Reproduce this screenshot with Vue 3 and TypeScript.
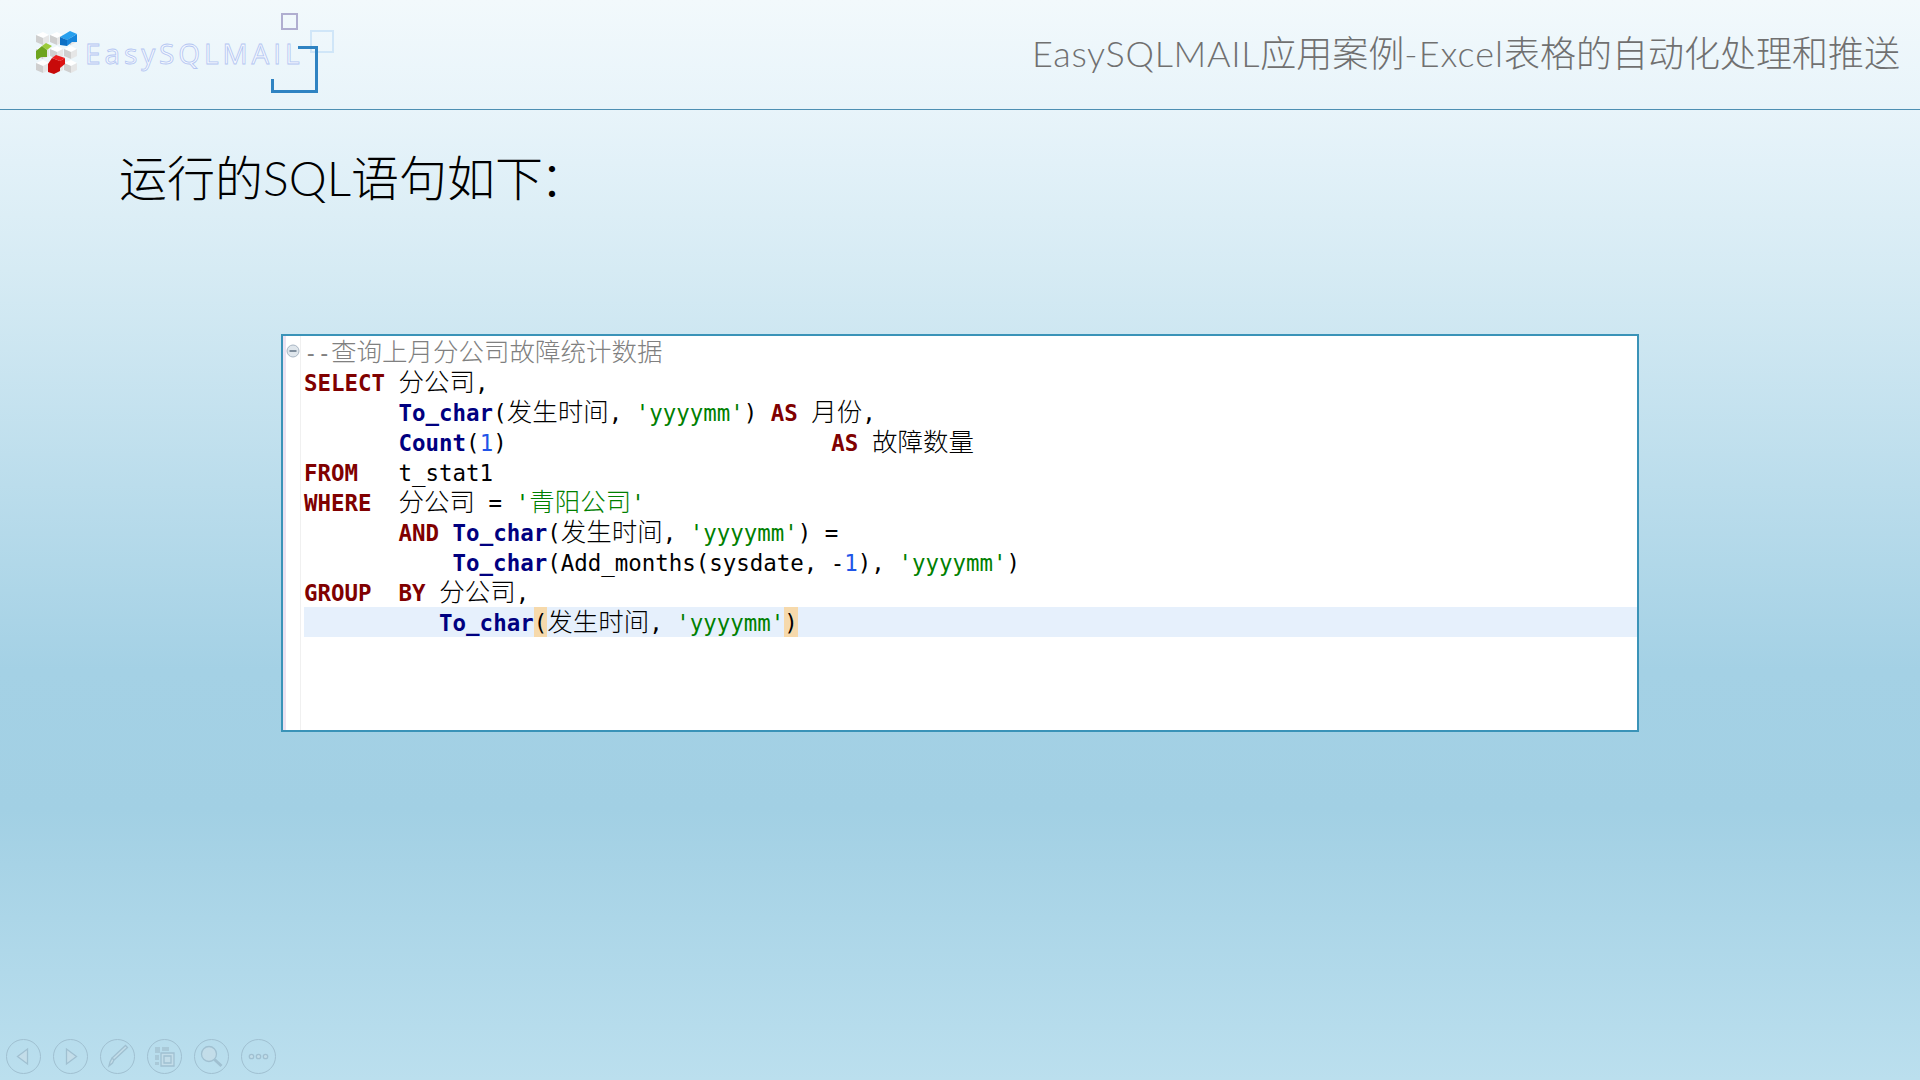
<script setup lang="ts">
type Tok = [string, string]
const lines: Tok[][] = [
  [['cm', '--'], ['cm cn', '查询上月分公司故障统计数据']],
  [['kw', 'SELECT'], ['', ' '], ['cn', '分公司'], ['', ',']],
  [['', '       '], ['fn', 'To_char'], ['', '('], ['cn', '发生时间'], ['', ', '], ['st', "'yyyymm'"], ['', ') '], ['kw', 'AS'], ['', ' '], ['cn', '月份'], ['', ',']],
  [['', '       '], ['fn', 'Count'], ['', '('], ['nu', '1'], ['', ')                       '], ['kw shift', 'AS'], ['', ' '], ['cn', '故障数量']],
  [['kw', 'FROM'], ['', '   t_stat1']],
  [['kw', 'WHERE'], ['', '  '], ['cn', '分公司'], ['', ' = '], ['st', "'"], ['st cn', '青阳公司'], ['st', "'"]],
  [['', '       '], ['kw', 'AND'], ['', ' '], ['fn', 'To_char'], ['', '('], ['cn', '发生时间'], ['', ', '], ['st', "'yyyymm'"], ['', ') =']],
  [['', '           '], ['fn', 'To_char'], ['', '(Add_months(sysdate, -'], ['nu', '1'], ['', '), '], ['st', "'yyyymm'"], ['', ')']],
  [['kw', 'GROUP'], ['', '  '], ['kw', 'BY'], ['', ' '], ['cn', '分公司'], ['', ',']],
  [['', '          '], ['fn', 'To_char'], ['hl', '('], ['cn', '发生时间'], ['', ', '], ['st', "'yyyymm'"], ['hl', ')']],
]
const tiles: [number, number][] = []
for (const y of [32, 46, 60]) for (const x of [36, 50, 64]) tiles.push([x, y])
const poly = (x: number, y: number, pts: number[][]) =>
  pts.map(([a, b]) => `${x + a},${y + b}`).join(' ')
</script>

<template>
  <div class="slide">
    <header class="top">
      <div class="logo">
        <svg class="cube" width="44" height="46" viewBox="34 30 44 46">
          <g v-for="(t, i) in tiles" :key="i">
            <polygon :points="poly(t[0], t[1], [[0, 3], [7, 0], [13, 3], [7, 6]])" fill="#fff" />
            <polygon :points="poly(t[0], t[1], [[0, 3], [7, 6], [7, 13], [0, 10]])" fill="#cfcfcf" />
            <polygon :points="poly(t[0], t[1], [[7, 6], [13, 3], [13, 10], [7, 13]])" fill="#e6e6e6" />
          </g>
          <polygon points="60,37 70,31 77,34 67,40" fill="#27a0ee" />
          <polygon points="60,37 67,40 67,46 60,45" fill="#0b6fc4" />
          <polygon points="67,40 77,34 77,42 72,42 67,46" fill="#1585dc" />
          <polygon points="42,46 46,43 52,46 47,50" fill="#9ccb3a" />
          <polygon points="36,51 42,46 47,50 47,57 41,57 37,60 36,58" fill="#6ea51f" />
          <polygon points="52,58 56,55 65,58 60,61" fill="#ee1c1c" />
          <polygon points="48,64 52,58 60,61 60,71 54,74 48,72" fill="#c80a0a" />
          <polygon points="60,61 65,58 65,64 60,68" fill="#dc1212" />
        </svg>
        <span class="brand">EasySQLMAIL</span>
        <i class="sq sq-a"></i>
        <i class="sq sq-b"></i>
        <i class="bracket"></i>
        <i class="tick"></i>
      </div>
      <div class="title"><span class="t-a">EasySQLMAIL</span>应用案例<span class="t-b">-Excel</span>表格的自动化处理和推送</div>
    </header>

    <h1 class="heading">运行的SQL语句如下<span class="colon">：</span></h1>

    <section class="editor">
      <div class="gutter">
        <svg class="fold" width="14" height="14" viewBox="0 0 14 14">
          <circle cx="7" cy="7" r="6" fill="#dfe6ec" stroke="#a9b6c4" />
          <path d="M3.5 7h7" stroke="#56687c" stroke-width="1.4" />
        </svg>
      </div>
      <div class="code">
        <div v-for="(l, i) in lines" :key="i" class="line" :class="{ cur: i === 9 }">
          <span v-for="(t, j) in l" :key="j" :class="t[0]">{{ t[1] }}</span>
        </div>
      </div>
    </section>

    <footer class="nav">
      <button class="btn">
        <svg width="33" height="33" viewBox="1 1 33 33"><path d="M21.5 10v15L11.5 17.500z" class="ic" /></svg>
      </button>
      <button class="btn">
        <svg width="33" height="33" viewBox="1 1 33 33"><path d="M13.500 10v15l10-7.500z" class="ic" /></svg>
      </button>
      <button class="btn">
        <svg width="33" height="33" viewBox="1 1 33 33"><path d="M27.500 8.500 14 21l-2-2L25.500 6.500zM12 19l2 2-1.500 3-3.500 3 1-4z" class="ic" /></svg>
      </button>
      <button class="btn">
        <svg width="33" height="33" viewBox="1 1 33 33">
          <path d="M8 8h5v6H8zM15 8h7v4h-7zM8 16h4v5H8zM8 23h4v3H8z" class="ic solid" />
          <path d="M14 14h13v13H14z" class="ic" />
          <path d="M17 17h7v7h-7z" class="ic" />
        </svg>
      </button>
      <button class="btn">
        <svg width="33" height="33" viewBox="1 1 33 33">
          <circle cx="15" cy="15" r="7.500" class="ic" />
          <path d="m20.500 20.500 7 6.500" class="ic thick" />
        </svg>
      </button>
      <button class="btn">
        <svg width="33" height="33" viewBox="1 1 33 33">
          <circle cx="10.500" cy="17.500" r="2.200" class="ic" />
          <circle cx="17.500" cy="17.500" r="2.200" class="ic" />
          <circle cx="24.500" cy="17.500" r="2.200" class="ic" />
        </svg>
      </button>
    </footer>
  </div>
</template>

<style scoped>
.slide {
  width: 1920px;
  height: 1080px;
  overflow: hidden;
  display: flex;
  flex-direction: column;
  background: linear-gradient(180deg, #f2f9fc 0%, #e8f4fa 10%, #d6ebf4 25%, #a4d1e5 62%, #a2d0e4 75%, #bbdfee 100%);
  font-family: "Lato", "Noto Sans CJK SC", sans-serif;
}
.top {
  height: 109px;
  flex: none;
  border-bottom: 1px solid #4d8fb3;
  display: flex;
  justify-content: space-between;
  align-items: center;
  padding-right: 20px;
}
.logo {
  position: relative;
  width: 340px;
  height: 109px;
}
.cube {
  position: absolute;
  left: 34px;
  top: 30px;
}
.brand {
  position: absolute;
  left: 85px;
  top: 35px;
  font-family: "Open Sans", sans-serif;
  font-size: 28px;
  line-height: 36px;
  letter-spacing: 3.900px;
  color: #f4f8fe;
  -webkit-text-stroke: 0.800px #b4c6f2;
}
.sq { position: absolute; box-sizing: border-box; }
.sq-a { left: 281px; top: 13px; width: 17px; height: 17px; border: 2.500px solid #b0aed0; }
.sq-b { left: 310px; top: 30px; width: 24px; height: 23px; border: 2.500px solid #d0e6f8; }
.bracket {
  position: absolute;
  box-sizing: border-box;
  left: 271px;
  top: 46px;
  width: 47px;
  height: 47px;
  border-left: 3px solid #2f83c2;
  border-right: 3px solid #2f83c2;
  border-bottom: 3px solid #2f83c2;
  clip-path: polygon(0 33px, 100% 33px, 100% 100%, 0 100%);
}
.tick {
  position: absolute;
  left: 298px;
  top: 46px;
  width: 20px;
  height: 33px;
  box-sizing: border-box;
  border-top: 3px solid #2f83c2;
  border-right: 3px solid #2f83c2;
}
.title {
  font-size: 36px;
  line-height: 44px;
  font-weight: 300;
  color: #707070;
  white-space: nowrap;
  margin-top: -4px;
}
.t-a { letter-spacing: 0.700px; }
.t-b { letter-spacing: 1px; }
.heading {
  margin: 40px 0 0 119px;
  height: 64px;
  font-size: 48px;
  line-height: 56px;
  font-weight: 300;
  color: #000;
  white-space: nowrap;
}
.colon { margin-left: -3px; }
.editor {
  margin: 120px 0 0 281px;
  width: 1358px;
  height: 398px;
  box-sizing: border-box;
  flex: none;
  border: 2px solid #3a93b8;
  background: #fff;
  display: flex;
}
.gutter {
  width: 14px;
  flex: none;
  border-left: 3px solid #ebe2f1;
  border-right: 1px solid #f0f0f0;
  position: relative;
}
.fold {
  position: absolute;
  left: 0;
  top: 8px;
}
.code {
  flex: 1;
  margin-left: 3px;
  padding-top: 1px;
  font-family: "DejaVu Sans Mono", monospace;
  font-size: 22.450px;
  color: #000;
}
.line {
  height: 30px;
  line-height: 32px;
  white-space: pre;
}
.cur { background: #e6f0fc; }
.cn { font-family: "Noto Sans CJK SC", sans-serif; font-size: 25.500px; line-height: 0; font-weight: 300; }
.kw { color: #800000; font-weight: 700; }
.fn { color: #000080; font-weight: 700; }
.st { color: #008000; }
.nu { color: #1f55e8; }
.cm { color: #808080; }
.shift { margin-left: 14px; }
.hl { background: #f6d9ab; display: inline-block; height: 30px; }
.nav {
  margin-top: auto;
  display: flex;
  gap: 12px;
  padding: 0 0 6px 6px;
}
.btn {
  width: 35px;
  height: 35px;
  padding: 0;
  border: 1.500px solid #a0c0d1;
  border-radius: 50%;
  background: transparent;
  display: flex;
  align-items: center;
  justify-content: center;
  box-sizing: border-box;
}
.btn svg { flex: none; }
.ic {
  fill: #c3dde9;
  stroke: #a0c0d1;
  stroke-width: 1.300;
}
.solid { fill: #a9c9d8; stroke: none; }
.thick { stroke-width: 3; fill: none; }
</style>

<style>
html, body { margin: 0; padding: 0; }
</style>
